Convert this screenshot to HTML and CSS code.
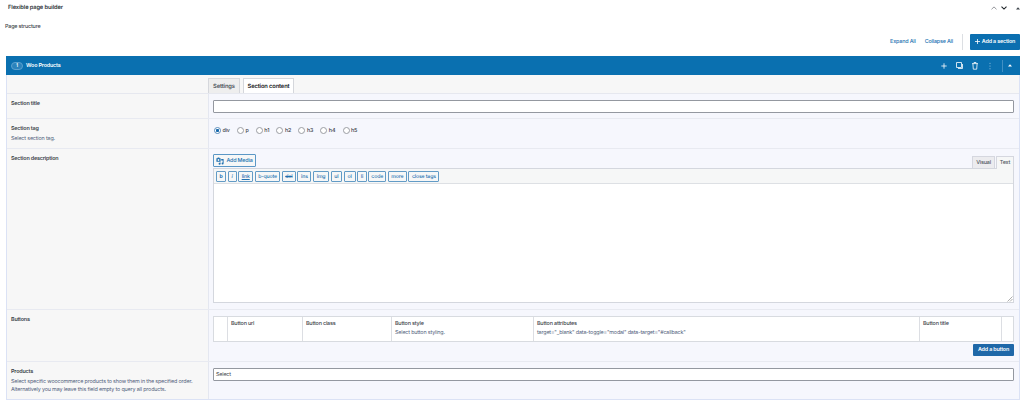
FILE: index.html
```html
<!DOCTYPE html>
<html lang="en">
<head>
    <meta charset="UTF-8">
    <meta name="viewport" content="width=device-width, initial-scale=1.0">
    <title>Flexible page builder</title>
    <link rel="stylesheet" href="styles.css">
</head>
<body>

    <div class="box-header">
        <h2>Flexible page builder</h2>
        <div class="box-actions">
            <svg class="arrow-up" width="6" height="4" viewBox="0 0 6 4"><path d="M.5 3.3 3 .9l2.5 2.4"/></svg>
            <svg class="arrow-down" width="6" height="4" viewBox="0 0 6 4"><path d="M.5.7 3 3.1 5.5.7"/></svg>
            <svg class="toggle" width="4" height="3" viewBox="0 0 4 3"><path d="M0 2.6 2 .3l2 2.3z"/></svg>
        </div>
    </div>

    <div class="field-label">Page structure</div>

    <div class="top-actions">
        <a href="#">Expand All</a>
        <a href="#">Collapse All</a>
        <div class="add-wrap">
            <button type="button" class="button-primary add-section">
                <svg width="5" height="5" viewBox="0 0 5 5"><path d="M2.5 0v5M0 2.5h5"/></svg>Add a section
            </button>
        </div>
    </div>

    <div class="layout">
        <div class="layout-handle">
            <span class="order">1</span>
            <span class="layout-title">Woo Products</span>
            <div class="layout-controls">
                <svg width="6" height="6" viewBox="0 0 6 6"><path d="M3 .3v5.4M.3 3h5.4"/></svg>
                <svg width="7" height="7" viewBox="0 0 7 7"><path d="M.5.5h5v5h-5zM2 6.5h4.5V2"/></svg>
                <svg width="6" height="8" viewBox="0 0 6 8"><path d="M0 1.6h6M2 1.4V.5h2v.9M.9 1.8l.4 5.4h3.4l.4-5.4"/></svg>
                <svg class="dots" width="2" height="8" viewBox="0 0 2 8"><circle cx="1" cy="1.3" r=".5"/><circle cx="1" cy="4" r=".5"/><circle cx="1" cy="6.7" r=".5"/></svg>
                <span class="divider"></span>
                <svg class="toggle" width="4" height="3" viewBox="0 0 4 3"><path d="M0 2.6 2 .3l2 2.3z"/></svg>
            </div>
        </div>

        <div class="tabs">
            <span class="tab">Settings</span>
            <span class="tab active">Section content</span>
        </div>

        <div class="row row-title">
            <div class="label"><b>Section title</b></div>
            <div class="input"><div class="text-input"></div></div>
        </div>

        <div class="row row-tag">
            <div class="label">
                <b>Section tag</b>
                <p>Select section tag.</p>
            </div>
            <div class="input radios">
                <span class="radio checked"><i></i>div</span>
                <span class="radio"><i></i>p</span>
                <span class="radio"><i></i>h1</span>
                <span class="radio"><i></i>h2</span>
                <span class="radio"><i></i>h3</span>
                <span class="radio"><i></i>h4</span>
                <span class="radio"><i></i>h5</span>
            </div>
        </div>

        <div class="row row-description">
            <div class="label"><b>Section description</b></div>
            <div class="input editor">
                <div class="editor-tools">
                    <button type="button" class="add-media">
                        <svg width="8" height="8" viewBox="0 0 8 8"><path d="M.4 1.2h1l.4-.7h1.4l.4.7h1v3.6H.4z"/><path d="M5.2 2h2.4v4.6a1 1 0 1 1-.9-1V3.4H5.2zM4.6 5.4v1.4a1 1 0 1 1-.9-1v-.4z"/><circle cx="2.5" cy="3" r=".9"/></svg>Add Media
                    </button>
                    <div class="editor-tabs">
                        <span class="editor-tab">Visual</span>
                        <span class="editor-tab active">Text</span>
                    </div>
                </div>
                <div class="editor-area">
                    <div class="quicktags">
                        <span class="qt qt-b">b</span>
                        <span class="qt qt-i">i</span>
                        <span class="qt qt-link">link</span>
                        <span class="qt qt-quote">b-quote</span>
                        <span class="qt qt-del">del</span>
                        <span class="qt qt-ins">ins</span>
                        <span class="qt qt-img">img</span>
                        <span class="qt qt-ul">ul</span>
                        <span class="qt qt-ol">ol</span>
                        <span class="qt qt-li">li</span>
                        <span class="qt qt-code">code</span>
                        <span class="qt qt-more">more</span>
                        <span class="qt qt-close">close tags</span>
                    </div>
                    <div class="textarea">
                        <svg width="6" height="6" viewBox="0 0 6 6"><path d="M.5 5.5l5-5M3 5.5 5.5 3"/></svg>
                    </div>
                </div>
            </div>
        </div>

        <div class="row row-buttons">
            <div class="label"><b>Buttons</b></div>
            <div class="input">
                <div class="repeater">
                    <div></div>
                    <div>Button url</div>
                    <div>Button class</div>
                    <div>Button style<p>Select button styling.</p></div>
                    <div>Button attributes<p>target="_blank" data-toggle="modal" data-target="#callback"</p></div>
                    <div>Button title</div>
                    <div></div>
                </div>
                <button type="button" class="button-primary add-button">Add a button</button>
            </div>
        </div>

        <div class="row row-products">
            <div class="label">
                <b>Products</b>
                <p>Select specific woocommerce products to show them in the specified order.<br>Alternatively you may leave this field empty to query all products.</p>
            </div>
            <div class="input"><div class="text-input">Select</div></div>
        </div>
    </div>

</body>
</html>
```
FILE: styles.css
```css
* {
    box-sizing: border-box;
}

body {
    margin: 0;
    height: 402px;
    overflow: hidden;
    background: #fff;
    color: #3c434a;
    font-family: Inter, "Liberation Sans", sans-serif;
    font-size: 5.4px;
    letter-spacing: -.17px;
    line-height: 8px;
    text-rendering: geometricPrecision;
}

svg {
    display: block;
    flex: none;
    fill: none;
    stroke: currentColor;
    stroke-width: .8;
}

svg.toggle,
svg.dots {
    fill: currentColor;
    stroke: none;
}

button {
    font: inherit;
    letter-spacing: inherit;
    text-rendering: inherit;
    white-space: nowrap;
}

p {
    margin: 0;
}

.box-header {
    display: flex;
    align-items: center;
    justify-content: space-between;
    height: 16px;
    padding: 0 4px 0 8px;
}

.box-header h2 {
    margin: 0;
    font-size: 5.7px;
    font-weight: 600;
    letter-spacing: -.1px;
    color: #2c3338;
}

.box-actions {
    display: flex;
    align-items: center;
    gap: 4px;
}

.arrow-up {
    color: #787c82;
}

.arrow-down {
    color: #1d2327;
    stroke-width: 1.1;
}

.box-actions .toggle {
    margin-left: 5px;
}

.field-label {
    height: 17px;
    padding: 7px 0 0 5px;
    font-weight: 500;
}

.top-actions {
    display: flex;
    align-items: center;
    justify-content: flex-end;
    height: 17px;
    margin-right: 4px;
    font-weight: 500;
}

.top-actions a {
    margin-right: 9px;
    color: #2271b1;
    text-decoration: none;
}

.add-wrap {
    display: flex;
    align-items: center;
    height: 16px;
    padding-left: 7px;
    border-left: 1px solid #dcdfe3;
}

.button-primary {
    display: flex;
    align-items: center;
    justify-content: center;
    border: 0;
    border-radius: 1px;
    background: #0b6fb0;
    color: #fff;
    font-weight: 600;
    padding: 0;
}

.add-section {
    width: 50px;
    height: 16px;
    gap: 2px;
}

.layout {
    width: 1014px;
    height: 344px;
    margin: 6px 0 0 6px;
    border: 1px solid #dbe2f5;
    border-top: 0;
}

.layout-handle {
    display: flex;
    align-items: center;
    height: 19px;
    margin: 0 -1px;
    padding: 0 8px 0 5px;
    background: #0a70b0;
    color: #fff;
    font-weight: 600;
}

.order {
    width: 12px;
    height: 8px;
    margin-right: 3px;
    border: 1px solid #5ba1cf;
    border-radius: 4px;
    background: #2b83bc;
    text-align: center;
    font-size: 5px;
    line-height: 7px;
}

.layout-controls {
    display: flex;
    align-items: center;
    margin-left: auto;
}

.layout-controls svg {
    margin-right: 9px;
}

.layout-controls .dots {
    margin: 0 10px 0 2px;
    color: #b5d4e7;
}

.layout-controls .divider {
    width: 1px;
    height: 12px;
    margin: 0 5px 0 1px;
    background: #4190c4;
}

.layout-controls svg.toggle {
    margin-right: 0;
}

.tabs {
    display: flex;
    align-items: flex-end;
    gap: 3px;
    height: 19px;
    padding-left: 201px;
    border-bottom: 1px solid #e6e8ef;
    background: #f7f7f7;
}

.tab {
    width: 32px;
    height: 15px;
    border: 1px solid #d5d7dc;
    border-bottom: 0;
    background: #eee;
    color: #50575e;
    font-size: 5.8px;
    font-weight: 600;
    letter-spacing: -.15px;
    line-height: 16px;
    text-align: center;
}

.tab.active {
    width: 51px;
    height: 15px;
    background: #fff;
    color: #1d2327;
}

.row {
    display: flex;
    border-bottom: 1px solid #e8eaf1;
}

.row:last-child {
    border-bottom: 0;
}

.row-title { height: 25px; }
.row-tag { height: 30px; }
.row-description { height: 161px; }
.row-buttons { height: 52px; }
.row-products { height: 37px; }

.label {
    width: 202px;
    padding: 6px 0 0 4px;
    border-right: 1px solid #e4e7f0;
    background: #f7f7f7;
}

.label b {
    display: block;
    font-weight: 600;
}

.label p,
.repeater p {
    margin-top: 1px;
    color: #50607b;
    font-weight: 400;
    white-space: nowrap;
}

.label p {
    margin-top: 2px;
}

.input {
    flex: 1;
    padding: 6px 5px 0 4px;
    background: #f6f7fd;
}

.text-input {
    height: 13px;
    padding-left: 2px;
    border: 1px solid #9498a0;
    border-radius: 1px;
    background: #fff;
    line-height: 12px;
}

.radios {
    display: flex;
    gap: 7.2px;
    padding: 8px 0 0 5px;
}

.radio {
    display: flex;
    align-items: center;
    height: 8px;
    gap: 1.5px;
    font-weight: 500;
}

.radio i {
    width: 7px;
    height: 7px;
    margin-bottom: 2px;
    border: 1px solid #9a9da2;
    border-radius: 50%;
    background: #fff;
}

.radio.checked i {
    border-color: #5a8dbb;
    background: radial-gradient(circle, #1668ac 1.3px, #fff 1.9px);
}

.editor {
    padding-top: 5px;
}

.editor-tools {
    display: flex;
    justify-content: space-between;
    height: 14px;
}

.add-media {
    display: flex;
    align-items: center;
    justify-content: center;
    gap: 2px;
    width: 43px;
    height: 13px;
    padding: 0;
    border: 1px solid #5b97c6;
    border-radius: 1px;
    background: #f6f7f7;
    color: #2271b1;
    font-weight: 500;
}

.add-media svg {
    fill: currentColor;
    stroke: none;
}

.add-media circle {
    fill: #f6f7f7;
}

.editor-tabs {
    display: flex;
    align-items: flex-end;
    gap: 1px;
}

.editor-tab {
    width: 23px;
    height: 12px;
    border: 1px solid #d5d7df;
    border-bottom: 0;
    background: #ececef;
    color: #50575e;
    line-height: 12px;
    text-align: center;
    font-weight: 500;
}

.editor-tab.active {
    width: 18px;
    height: 13px;
    margin-bottom: -1px;
    background: #f6f7f7;
}

.editor-area {
    height: 135px;
    border: 1px solid #d4d7de;
}

.quicktags {
    display: flex;
    gap: 1.6px;
    height: 15px;
    padding: 2px;
    border-bottom: 1px solid #dde0e4;
    background: #f6f7f7;
}

.qt {
    height: 11px;
    border: 1px solid #629bc6;
    border-radius: 1px;
    color: #2271b1;
    font-size: 5.2px;
    font-weight: 500;
    letter-spacing: -.15px;
    line-height: 10px;
    text-align: center;
}

.qt-b { width: 10px; font-weight: 700; }
.qt-i { width: 9px; font-style: italic; }
.qt-link { width: 15px; text-decoration: underline; }
.qt-quote { width: 25.5px; }
.qt-del { width: 14px; text-decoration: line-through; }
.qt-ins { width: 14px; }
.qt-img { width: 16px; }
.qt-ul { width: 11.4px; }
.qt-ol { width: 12px; }
.qt-li { width: 9.4px; }
.qt-code { width: 18px; }
.qt-more { width: 19px; }
.qt-close { width: 31px; }

.textarea {
    display: flex;
    align-items: flex-end;
    justify-content: flex-end;
    height: 118px;
    background: #fff;
    color: #777;
}

.textarea svg {
    stroke-width: .6;
}

.repeater {
    display: grid;
    grid-template-columns: 14px 75px 89px 142px 386px 82px 1fr;
    height: 26px;
    border: 1px solid #d8dbe0;
    background: #fff;
    font-weight: 500;
}

.repeater > div {
    padding: 3px 0 0 3px;
    border-right: 1px solid #dcdee3;
}

.repeater > div:last-child {
    border-right: 0;
}

.add-button {
    width: 41px;
    height: 12px;
    margin: 2px 0 0 auto;
    background: #1f68a8;
}
```
